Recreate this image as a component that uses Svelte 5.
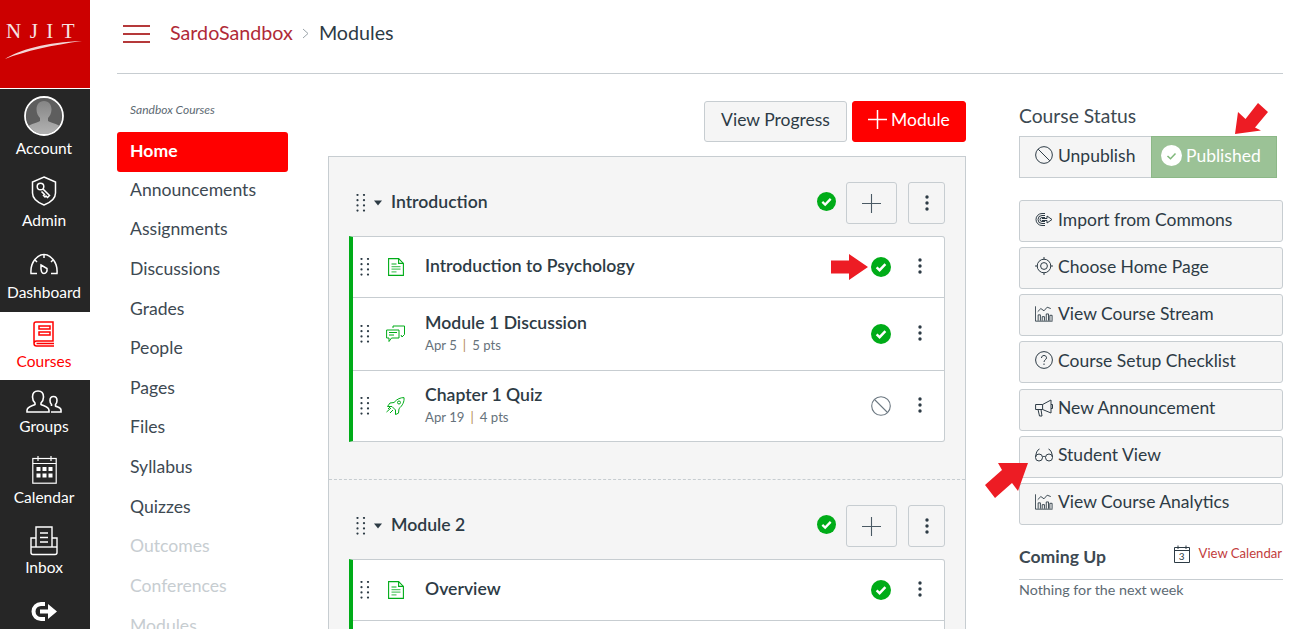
<script>
  const courseLinks = [
    ['Announcements', false], ['Assignments', false], ['Discussions', false], ['Grades', false],
    ['People', false], ['Pages', false], ['Files', false], ['Syllabus', false], ['Quizzes', false],
    ['Outcomes', true], ['Conferences', true], ['Modules', true]
  ];
</script>

{#snippet dots(cls)}
  <svg class={cls} width="10" height="18" viewBox="0 0 10 18" fill="#2d3b45" aria-hidden="true">
    {#each [1, 6.2, 11.4, 16.6] as y}
      <circle cx="1.5" cy={y} r="1.1" /><circle cx="8" cy={y} r="1.1" />
    {/each}
  </svg>
{/snippet}

{#snippet kebab()}
  <svg width="4" height="16" viewBox="0 0 4 16" fill="#2d3b45" aria-hidden="true">
    <circle cx="2" cy="2" r="1.7" /><circle cx="2" cy="8" r="1.7" /><circle cx="2" cy="14" r="1.7" />
  </svg>
{/snippet}

{#snippet check(size)}
  <svg width={size} height={size} viewBox="0 0 20 20" aria-hidden="true">
    <circle cx="10" cy="10" r="10" fill="#00ac18" />
    <path d="M5.6 10.4l3 2.8 5.8-6" fill="none" stroke="#fff" stroke-width="2.4" />
  </svg>
{/snippet}

{#snippet ban(size, color)}
  <svg width={size} height={size} viewBox="0 0 20 20" fill="none" stroke={color} stroke-width="1.1" aria-hidden="true">
    <circle cx="10" cy="10" r="9.3" /><path d="M3.5 3.5l13 13" />
  </svg>
{/snippet}

{#snippet chart()}
  <svg width="18" height="17" viewBox="0 0 20 18" fill="none" stroke="#2d3b45" stroke-width="1" aria-hidden="true">
    <path d="M.5 1v16.5h19" />
    <path d="M3 7l3.500-3.500 3.500 2.500 3.500-4 4 1.500" />
    <path d="M3.500 17v-6.500h2.500V17M8 17v-4.500h2.500V17M12.500 17V9.500H15V17M16.500 17v-6h2.500v6" />
  </svg>
{/snippet}

{#snippet modHeader(title)}
  <div class="mod-head">
    {@render dots('mod-dots')}
    <svg class="caret" width="8" height="6" viewBox="0 0 8 6" aria-hidden="true"><path d="M0 .5h8L4 5.500z" fill="#2d3b45" /></svg>
    <span class="mod-title">{title}</span>
    <span class="mod-check">{@render check(19)}</span>
    <button class="mod-add" aria-label="Add">
      <svg width="19" height="19" viewBox="0 0 19 19" stroke="#4a5a64" stroke-width="1.100" aria-hidden="true"><path d="M0 9.500h19M9.500 0v19" /></svg>
    </button>
    <button class="mod-more" aria-label="More">{@render kebab()}</button>
  </div>
{/snippet}

{#snippet pageIcon()}
  <svg width="16" height="18" viewBox="0 0 16 18" fill="none" stroke="#00ac18" stroke-width="1.100" aria-hidden="true">
    <path d="M.6.6h10l4.800 4.800v12H.6z" /><path d="M10.600.6v4.800h4.800" />
    <path d="M3.500 6h5M3.500 8.600h9M3.500 11.200h9M3.500 13.800h5" stroke-width="1.300" opacity=".65" />
  </svg>
{/snippet}

<div class="page">
  <nav class="rail">
    <div class="logo">
      <span class="logo-text">NJIT</span>
      <svg class="swoosh" width="78" height="20" viewBox="0 0 78 20" aria-hidden="true"><path d="M0 19C14 10 42 2 77 1 48 5 20 11 0 19z" fill="#f3d6d6" /></svg>
    </div>
    <a class="item account">
      <svg width="40" height="40" viewBox="0 0 40 40" aria-hidden="true">
        <defs>
          <linearGradient id="av" x1="0" y1="0" x2="0" y2="1"><stop offset="0" stop-color="#858585" /><stop offset="1" stop-color="#b5b5b5" /></linearGradient>
          <clipPath id="avc"><circle cx="20" cy="20" r="18" /></clipPath>
        </defs>
        <circle cx="20" cy="20" r="18" fill="#5e5e5e" />
        <g clip-path="url(#avc)">
          <path d="M20 5c5 0 7.500 4 7.500 8.500 0 4-2 7-3.500 8.500v3c3 2 13 3 14 9v6H2v-6c1-6 11-7 14-9v-3c-1.500-1.500-3.500-4.500-3.500-8.500C12.500 9 15 5 20 5z" fill="url(#av)" />
        </g>
        <circle cx="20" cy="20" r="19" fill="none" stroke="#fff" stroke-width="1.800" />
      </svg>
      <span>Account</span>
    </a>
    <a class="item admin">
      <svg width="26" height="30" viewBox="0 0 26 30" fill="none" stroke="#fff" stroke-width="1.500" aria-hidden="true">
        <path d="M13 1l11.500 5v11c0 5-5 9.500-11.500 12C6.500 26.500 1.500 22 1.500 17V6z" />
        <circle cx="9.500" cy="10.500" r="3.300" /><path d="M12 13l6.500 6.500-2 2-1.500-1.500-1 1-1.500-1.500 1-1-3-3" />
      </svg>
      <span>Admin</span>
    </a>
    <a class="item dashboard">
      <svg width="28" height="22" viewBox="0 0 28 22" fill="none" stroke="#fff" stroke-width="1.500" aria-hidden="true">
        <path d="M7 20.500H1c-1-12 7-19 13-19s14 7 13 19h-6" />
        <path d="M14 2v3M5 7l2 2M23 7l-2 2" />
        <path d="M11 12l6 3.500c.5 3-1 5-3 5s-3.500-2-3-8.500z" />
      </svg>
      <span>Dashboard</span>
    </a>
    <a class="item courses active">
      <svg width="22" height="26" viewBox="0 0 22 26" fill="none" stroke="#ff0000" stroke-width="1.500" aria-hidden="true">
        <path d="M1 22V3c0-1 1-2 2-2h17v19H3.500C2 20 1 21 1 22.500S2 25 3.500 25H21" />
        <path d="M3.500 22.500H21" />
        <rect x="6" y="5" width="11" height="3" /><rect x="6" y="11" width="11" height="3" />
      </svg>
      <span>Courses</span>
    </a>
    <a class="item groups">
      <svg width="36" height="23" viewBox="0 0 36 23" fill="none" stroke="#fff" stroke-width="1.600" aria-hidden="true">
        <path d="M12 1c3.500 0 5.500 2.500 5.500 6 0 3-1.500 5-2.500 6v1.500c3 1.500 8 2 8 6v1.500H1v-1.500c0-4 5-4.500 8-6V13c-1-1-2.500-3-2.500-6 0-3.500 2-6 5.500-6z" />
        <path d="M25 22h10v-2c0-2.500-4-3-5.500-4v-1.500c1-1 1.500-2 1.500-4 0-2.500-1.500-4-3.500-4s-3.500 1.500-3.500 4c0 2 .5 3 1.500 4V16" />
      </svg>
      <span>Groups</span>
    </a>
    <a class="item calendar">
      <svg width="25" height="29" viewBox="0 0 25 29" fill="none" stroke="#fff" stroke-width="1.200" aria-hidden="true">
        <rect x=".8" y="3.500" width="23.400" height="24.700" /><path d="M.8 8.500h23.400M6 1v5M19 1v5" />
        <g fill="#fff" stroke="none">
          {#each [4.500, 10.500, 16.500] as x}
            <rect {x} y="12" width="4" height="4" /><rect {x} y="18.500" width="4" height="4" />
          {/each}
        </g>
      </svg>
      <span>Calendar</span>
    </a>
    <a class="item inbox">
      <svg width="28" height="30" viewBox="0 0 28 30" fill="none" stroke="#fff" stroke-width="1.400" aria-hidden="true">
        <path d="M6 21V1h16v20" /><path d="M10 7h8M10 11.500h8M10 16h8" />
        <path d="M6 12H1v14.500c0 1 1 2 2 2h22c1 0 2-1 2-2V12h-5" /><path d="M1 21h26" />
      </svg>
      <span>Inbox</span>
    </a>
    <a class="item logout" aria-label="Logout">
      <svg width="28" height="21" viewBox="0 0 28 21" aria-hidden="true">
        <path d="M15 3H11a7.500 7.500 0 0 0 0 15h4" fill="none" stroke="#fff" stroke-width="4" />
        <path d="M10 8.500h8V3l9 7.500-9 7.500v-5.500h-8z" fill="#fff" />
      </svg>
    </a>
  </nav>

  <div class="main">
    <header class="top">
      <svg class="burger" width="27" height="18" viewBox="0 0 27 18" stroke="#b5393a" stroke-width="1.800" aria-hidden="true"><path d="M0 1h27M0 9h27M0 17h27" /></svg>
      <a class="crumb">SardoSandbox</a>
      <svg class="sep" width="7" height="11" viewBox="0 0 7 11" fill="none" stroke="#9aa3a9" aria-hidden="true"><path d="M1 1l5 4.500-5 4.500" /></svg>
      <span class="here">Modules</span>
    </header>

    <div class="body">
      <aside class="course-nav">
        <div class="term">Sandbox Courses</div>
        <a class="link home">Home</a>
        {#each courseLinks as [label, off]}
          <a class="link" class:off>{label}</a>
        {/each}
      </aside>

      <section class="content">
        <div class="toolbar">
          <button class="btn progress">View Progress</button>
          <button class="btn add-module">
            <svg width="19" height="19" viewBox="0 0 19 19" stroke="#fff" stroke-width="1.500" aria-hidden="true"><path d="M0 9.500h19M9.500 0v19" /></svg>
            Module
          </button>
        </div>
        <div class="modules">
          <div class="module">
            {@render modHeader('Introduction')}
            <div class="rows">
              <div class="row r61">
                {@render dots('row-dots')}
                <span class="type">{@render pageIcon()}</span>
                <div class="info"><div class="name">Introduction to Psychology</div></div>
                <span class="status">{@render check(20)}</span>
                <span class="more">{@render kebab()}</span>
              </div>
              <div class="row r73">
                {@render dots('row-dots')}
                <span class="type">
                  <svg width="19" height="18" viewBox="0 0 19 18" fill="none" stroke="#00ac18" stroke-width="1" aria-hidden="true">
                    <path d="M7 3V1h11.500v8.500L16 12l-1-2" />
                    <path d="M.6 5h12.400v8H5.500L3 16.500V13H.6z" /><path d="M3 7.500h8M3 10h5" />
                  </svg>
                </span>
                <div class="info"><div class="name">Module 1 Discussion</div><div class="meta">Apr 5<i>|</i>5 pts</div></div>
                <span class="status">{@render check(20)}</span>
                <span class="more">{@render kebab()}</span>
              </div>
              <div class="row r71">
                {@render dots('row-dots')}
                <span class="type">
                  <svg width="19" height="18" viewBox="0 0 19 18" fill="none" stroke="#00ac18" stroke-width="1" aria-hidden="true">
                    <path d="M18 .6c.5 4-1.500 8-5 11l-.5 4.500-3 1.500V13L6 9.500H1.500L4 6l4-.5C11 2 14.500.5 18 .6z" />
                    <circle cx="13" cy="5.500" r="1.500" /><path d="M5 11l-4.500 4M7 13l-3 3M4 10l-2 2" />
                  </svg>
                </span>
                <div class="info"><div class="name">Chapter 1 Quiz</div><div class="meta">Apr 19<i>|</i>4 pts</div></div>
                <span class="status">{@render ban(20, '#6b7780')}</span>
                <span class="more">{@render kebab()}</span>
              </div>
            </div>
          </div>
          <div class="module second">
            {@render modHeader('Module 2')}
            <div class="rows">
              <div class="row r61">
                {@render dots('row-dots')}
                <span class="type">{@render pageIcon()}</span>
                <div class="info"><div class="name">Overview</div></div>
                <span class="status">{@render check(20)}</span>
                <span class="more">{@render kebab()}</span>
              </div>
              <div class="row r73"></div>
            </div>
          </div>
        </div>
      </section>

      <aside class="side">
        <h2>Course Status</h2>
        <div class="status-group">
          <button class="seg unpublish">{@render ban(18, '#2d3b45')}Unpublish</button>
          <button class="seg published">
            <svg width="21" height="21" viewBox="0 0 21 21" aria-hidden="true"><circle cx="10.500" cy="10.500" r="10.500" fill="#fff" /><path d="M6.500 11l3 2.800 5-5.300" fill="none" stroke="#7fb87a" stroke-width="1.500" /></svg>
            Published
          </button>
        </div>
        <div class="actions">
          <button class="btn action">
            <svg width="18" height="15" viewBox="0 0 18 15" fill="none" stroke="#2d3b45" stroke-width="1" aria-hidden="true">
              <path d="M10 1.500H7a6 6 0 0 0 0 12h3M10 3.500H7a4 4 0 0 0 0 8h3M10 5.500H7a2 2 0 0 0 0 4h3" />
              <path d="M7 6.500h5V4l5 3.500-5 3.500V8.500H7" fill="#f5f5f5" />
            </svg>
            Import from Commons
          </button>
          <button class="btn action">
            <svg width="18" height="18" viewBox="0 0 18 18" fill="none" stroke="#2d3b45" stroke-width="1" aria-hidden="true">
              <circle cx="9" cy="9" r="6.800" /><circle cx="9" cy="9" r="3.400" /><path d="M9 0v2.500M9 15.500V18M0 9h2.500M15.500 9H18" />
            </svg>
            Choose Home Page
          </button>
          <button class="btn action">{@render chart()}View Course Stream</button>
          <button class="btn action">
            <svg width="18" height="18" viewBox="0 0 18 18" fill="none" stroke="#2d3b45" stroke-width="1" aria-hidden="true">
              <circle cx="9" cy="9" r="8.400" /><path d="M6.500 7c0-1.500 1-2.500 2.500-2.500s2.500 1 2.500 2.300c0 2-2.500 2-2.500 4.200" /><path d="M9 12.500v1.500" />
            </svg>
            Course Setup Checklist
          </button>
          <button class="btn action">
            <svg width="18" height="18" viewBox="0 0 18 18" fill="none" stroke="#2d3b45" stroke-width="1" aria-hidden="true">
              <path d="M.6 5.500h7L16 1v13L7.600 10.500H.6zM7.600 5.500v5M3 10.500l1.500 6.500h2.500l-1-6.500M16 5.500h1.500v4H16" />
            </svg>
            New Announcement
          </button>
          <button class="btn action">
            <svg width="18" height="14" viewBox="0 0 18 14" fill="none" stroke="#2d3b45" stroke-width="1" aria-hidden="true">
              <circle cx="4" cy="9.500" r="3.500" /><circle cx="14" cy="9.500" r="3.500" /><path d="M7.500 9c.8-.8 2.200-.8 3 0M.6 9C1 5 2 2 4.500 1M17.500 9C17 5 16 2 13.500 1" />
            </svg>
            Student View
          </button>
          <button class="btn action">{@render chart()}View Course Analytics</button>
        </div>
        <div class="coming">
          <h3>Coming Up</h3>
          <a class="cal">
            <svg width="16" height="18" viewBox="0 0 16 18" fill="none" stroke="#2d3b45" stroke-width="1" aria-hidden="true"><path d="M.5 2.500h15v15H.5zM.5 5.500h15M4 .5v3.500M12 .5v3.500" /></svg>
            <span class="cal-day">3</span>
          </a>
          <a class="view-cal">View Calendar</a>
        </div>
        <p class="none">Nothing for the next week</p>
      </aside>
    </div>
  </div>

  <svg class="arrows" width="1292" height="629" viewBox="0 0 1292 629" fill="#ed1c24" aria-hidden="true">
    <path d="M831 260.500h18V254l19 13-19 13v-6.500h-18z" />
    <path d="M1235 134l3-22 7.500 7 12.500-16 10 9-13 15.500 6 3z" />
    <path d="M1028 463l-10 28-6-8-17 15-10-13 17-15-4-7z" />
  </svg>
</div>

<style>
  :global(body) { margin: 0; overflow: hidden; background: #fff; }
  .page {
    position: relative; display: flex; height: 629px; width: 1292px; overflow: hidden;
    font-family: Lato, "Open Sans", sans-serif; color: #2d3b45;
  }
  button { font: inherit; color: inherit; }

  .rail { width: 90px; flex: none; background: #262626; color: #fff; display: flex; flex-direction: column; }
  .logo { height: 88px; margin-bottom: 1px; box-shadow: 0 1px 0 #fff; background: #cc0000; position: relative; flex: none; }
  .logo-text {
    position: absolute; left: 6px; top: 19px; font: 21px/24px "Liberation Serif", serif;
    letter-spacing: 8.500px; color: #f6e3e3;
  }
  .swoosh { position: absolute; left: 5px; top: 40px; }
  .item {
    display: flex; flex-direction: column; align-items: center; flex: none; font-size: 15.500px; line-height: 16px;
    box-sizing: border-box; padding-right: 2px;
  }
  .account { height: 80px; padding-top: 7px; gap: 4px; }
  .admin { height: 72px; padding-top: 7px; gap: 6px; }
  .dashboard { height: 71px; padding-top: 12px; gap: 9px; }
  .courses { height: 68px; padding-top: 9px; gap: 6px; }
  .active { background: #fff; color: #ff0000; }
  .groups { height: 69px; padding-top: 10px; gap: 5px; }
  .calendar { height: 70px; padding-top: 6px; gap: 5px; }
  .inbox { height: 70px; padding-top: 7px; gap: 3px; }
  .logout { padding-top: 12px; }

  .main { flex: 1; padding: 0 9px 0 27px; min-width: 0; }
  .top { height: 65px; padding-bottom: 8px; border-bottom: 1px solid #c7cdd1; display: flex; align-items: center; }
  .burger { margin: 2px 20px 0 6px; }
  .crumb { font-size: 19.700px; color: #b02a37; }
  .sep { margin: 2px 10px 0 9px; }
  .here { font-size: 19.700px; color: #2d3b45; }

  .body { display: flex; }
  .course-nav { width: 171px; flex: none; margin-right: 40px; }
  .term { font-size: 12px; line-height: 14px; font-style: italic; color: #5d6a73; padding: 29px 0 15px 13px; }
  .link { display: block; height: 39.650px; line-height: 36px; font-size: 17.600px; padding-left: 13px; color: #3d4952; }
  .home { background: #ff0000; color: #fff; font-weight: 700; border-radius: 3px; line-height: 37px; }
  .off { color: #c7cdd1; }

  .content { width: 638px; flex: none; margin-right: 53px; }
  .toolbar { display: flex; justify-content: flex-end; gap: 5px; padding-top: 27px; margin-bottom: 14px; }
  .btn {
    display: flex; align-items: center; box-sizing: border-box; height: 41px; border: 1px solid #c7cdd1;
    border-radius: 3px; background: #f5f5f5; font-size: 17.500px; color: #2d3b45; padding-bottom: 4px;
  }
  .progress { width: 143px; justify-content: center; padding: 0 0 4px; }
  .add-module { width: 114px; padding: 0 0 4px 15px; gap: 4px; background: #ff0000; color: #fff; border-color: #ff0000; }
  .modules { border: 1px solid #c7cdd1; background: #f5f5f5; }
  .module { padding: 0 20px 37px 20px; }
  .second { border-top: 1px dashed #c7cdd1; }
  .mod-head { height: 79px; display: flex; align-items: center; padding-top: 13px; box-sizing: border-box; }
  .mod-dots { margin-left: 7px; }
  .caret { margin: 0 9px 0 8px; }
  .mod-title { font-size: 17.600px; font-weight: 600; flex: 1; padding-bottom: 4px; }
  .mod-check { display: flex; margin: 0 10px 4px 0; }
  .mod-add, .mod-more {
    height: 42px; display: flex; align-items: center; justify-content: center; background: #f5f5f5;
    border: 1px solid #c7cdd1; border-radius: 3px; padding: 0;
  }
  .mod-add { width: 51px; margin-right: 11px; }
  .mod-more { width: 37px; }

  .rows { border: 1px solid #c7cdd1; border-left: 4px solid #00ac18; border-radius: 0 3px 3px 0; background: #fff; }
  .row { display: flex; align-items: center; box-sizing: border-box; border-top: 1px solid #c7cdd1; }
  .row:first-child { border-top: 0; }
  .r61 { height: 60px; }
  .r73 { height: 73px; }
  .r71 { height: 71px; }
  .row-dots { margin-left: 7px; }
  .type { width: 19px; margin-left: 16px; display: flex; justify-content: center; margin-bottom: 1px; }
  .info { flex: 1; margin-left: 20px; padding-bottom: 3px; }
  .name { font-size: 17.600px; font-weight: 600; line-height: 24px; }
  .meta { font-size: 13.200px; line-height: 17px; color: #66727b; margin-top: 2px; }
  .meta i { font-style: normal; color: #b58a55; margin: 0 6px; }
  .status { display: flex; margin: 0 27px 1px 0; }
  .more { display: flex; margin: 0 22px 3px 0; }

  .side { width: 264px; flex: none; }
  h2 { font-size: 19.300px; line-height: 22px; font-weight: 400; margin: 0; padding-top: 31px; color: #3d4952; }
  .status-group { display: flex; margin-top: 9px; height: 42px; margin-bottom: 22px; }
  .seg { display: flex; align-items: center; box-sizing: border-box; font-size: 17.500px; border-radius: 0; }
  .unpublish { width: 132px; gap: 5px; padding: 0 0 4px 15px; background: #f5f5f5; border: 1px solid #c7cdd1; border-right: 0; }
  .published { width: 126px; gap: 4px; padding: 0 0 4px 9px; background: #9bc296; border: 1px solid #8cb887; color: #fff; }
  .actions { display: flex; flex-direction: column; gap: 5.160px; }
  .action { width: 264px; height: 42px; padding: 0 0 4px 15px; gap: 5px; }
  .coming { display: flex; align-items: flex-start; margin-top: 18px; height: 36px; border-bottom: 1px solid #c7cdd1; }
  h3 { font-size: 17.600px; line-height: 24px; font-weight: 700; margin: 2px 0 0; flex: 1; color: #3d4952; }
  .cal { position: relative; display: block; height: 18px; margin-right: 9px; margin-top: 2px; }
  .cal-day { position: absolute; left: 0; right: 0; top: 5px; font-size: 10px; line-height: 12px; text-align: center; }
  .view-cal { font-size: 13.100px; line-height: 20px; color: #c23c3c; padding-right: 1px; }
  .none { margin: 1px 0 0; font-size: 14.300px; line-height: 18px; color: #5d6a73; }

  .arrows { position: absolute; left: 0; top: 0; pointer-events: none; }
</style>
